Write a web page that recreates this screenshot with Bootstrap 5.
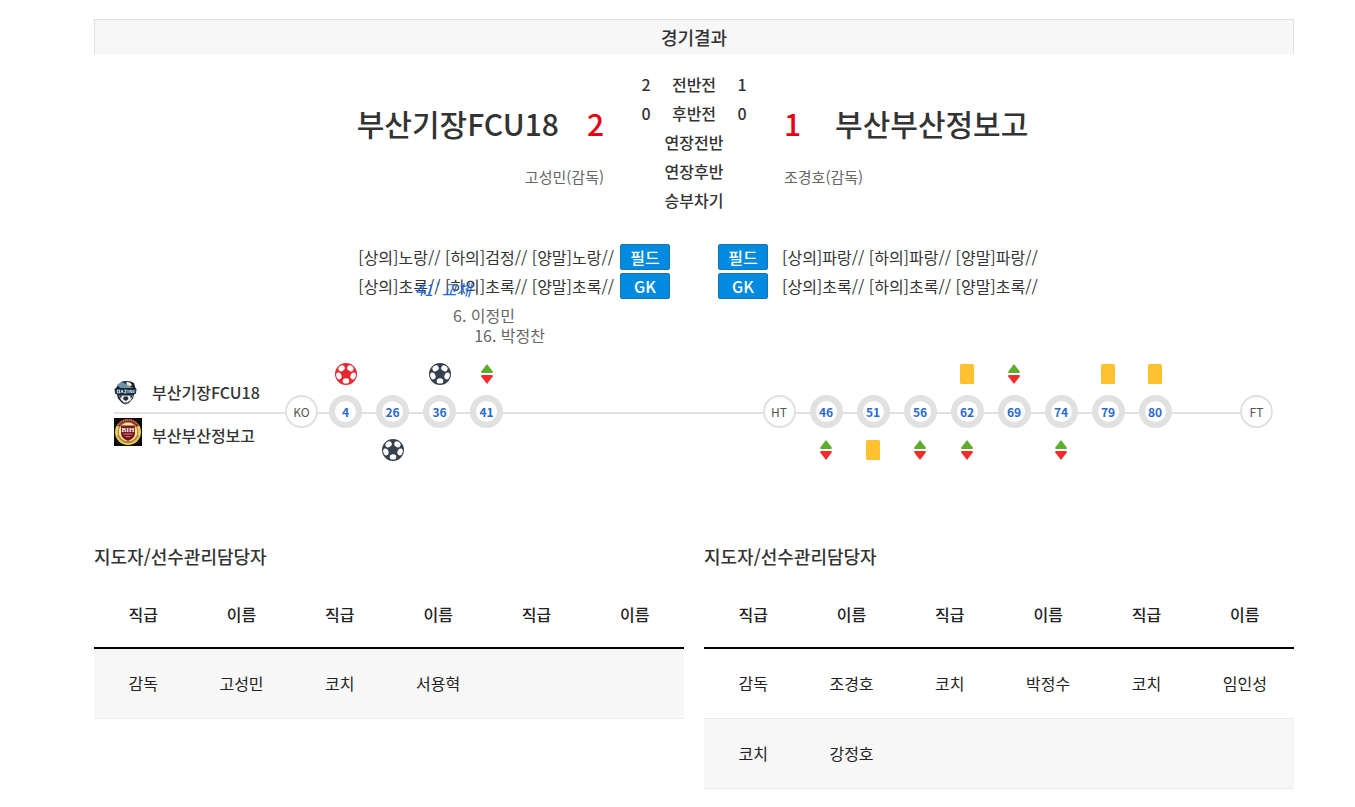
<!DOCTYPE html>
<html lang="ko">
<head>
<meta charset="utf-8">
<meta name="viewport" content="width=device-width, initial-scale=1">
<title>경기결과</title>
<link href="https://cdn.jsdelivr.net/npm/bootstrap@5.3.0/dist/css/bootstrap.min.css" rel="stylesheet">
<style>
  body { font-family: "Noto Sans CJK KR", "Noto Sans", sans-serif; font-size: 16px; line-height: 24px; color: #333; background: #fff; padding: 19px 0 18px 33px; }
  .wrap { max-width: 1200px; margin: 0 auto; }
  .page-title { font-size: 18px; line-height: 34px; font-weight: 500; background: #f7f7f7; border: 1px solid #e1e1e1; border-bottom: 0; margin: 0; text-align: center; }
  .score-grid { display: grid; grid-template-columns: 1fr 180px 1fr; padding-top: 15px; }
  .team-line { display: flex; gap: 28px; font-size: 30px; line-height: 44px; font-weight: 500; padding-top: 32px; }
  .team-line h2 { font-size: 30px; line-height: 44px; font-weight: 500; margin: 0; }
  .team-away { gap: 34px; }
  .goals { color: #e60012; }
  .coach { font-size: 15px; line-height: 22px; color: #666; margin-top: 21px; }
  .period-table { width: 132px; margin: 0 auto; font-weight: 500; }
  .period-table th { font-weight: 500; width: 60px; white-space: nowrap; }
  .period-table td, .period-table th { height: 29px; padding: 0; text-align: center; }
  .period-table td { width: 36px; }
  .kit-btn { width: 50px; height: 26px; padding: 0; font-size: 16px; line-height: 24px; font-weight: 500; color: #fff; background: #008ae0; border: 1px solid #1f73a8; border-radius: 2px; }
  .kit-btn:hover { color: #fff; background: #0079c6; }
  .kits { display: grid; grid-template-columns: 1fr 1fr; column-gap: 48px; row-gap: 3px; padding-top: 30px; }
  .kit-home, .kit-away { display: flex; align-items: center; }
  .kit-home { justify-content: flex-end; gap: 6px; }
  .kit-away { gap: 14px; }
  .timeline { position: relative; display: grid; grid-template-columns: 171px 1fr 1fr 33px; padding: 0 21px 0 20px; margin-top: 63px; }
  .timeline::before { content: ""; position: absolute; left: 20px; right: 37px; top: 50px; height: 2px; background: #e1e1e1; }
  .teams { position: relative; display: flex; flex-direction: column; gap: 10px; padding-top: 14px; font-weight: 500; }
  .club { display: flex; align-items: center; gap: 10px; height: 32px; }
  .club-away { height: 34px; }
  .club-away svg { align-self: flex-start; }
  .half { position: relative; display: flex; gap: 14px; }
  .slot { position: relative; width: 33px; display: grid; grid-template-rows: 24px 33px 26px; row-gap: 9px; align-items: center; justify-items: center; }
  .half-first .slot:first-child { margin-right: -3px; }
  .dot { grid-row: 2; width: 33px; height: 33px; border-radius: 50%; border: 2px solid #e1e1e1; background: #fff; color: #555; font-size: 12px; line-height: 29px; text-align: center; }
  .dot-event { border-width: 6px; line-height: 22px; color: #2a6ad6; font-weight: 700; text-decoration: none; display: block; white-space: nowrap; }
  .above { grid-row: 1; } .below { grid-row: 3; }
  .tip { position: absolute; left: -55px; bottom: 118px; width: 130px; white-space: nowrap; color: #666; line-height: 20px; }
  .tip-head { color: #1b6be0; font-style: italic; line-height: 32px; }
  .staff { --bs-gutter-x: 20px; margin-top: 80px; }
  .staff h3 { font-size: 18px; line-height: 26px; font-weight: 500; margin: 0; }
  .staff-table { table-layout: fixed; margin: 11px 0 0; --bs-table-bg: transparent; text-align: center; vertical-align: middle; }
  .staff-table th { height: 68px; padding: 0; font-weight: 500; vertical-align: middle; border: 0; border-bottom: 2px solid #000; color: #222; }
  .staff-table td { height: 70px; padding: 0; border: 0; border-bottom: 1px solid #ebebeb; color: #222; }
  .staff-table tbody tr:last-child td { background: #f7f7f7; }
</style>
</head>
<body>
<svg width="0" height="0" class="position-absolute" aria-hidden="true">
  <symbol id="ball" viewBox="0 0 22 22">
    <circle cx="11" cy="11" r="11" fill="currentColor"/>
    <g fill="#fff">
      <ellipse cx="6.600" cy="5.300" rx="3.300" ry="2.700" transform="rotate(-35 6.600 5.300)"/>
      <ellipse cx="15.400" cy="5.300" rx="3.300" ry="2.700" transform="rotate(35 15.400 5.300)"/>
      <ellipse cx="3.900" cy="12.900" rx="2.600" ry="3.500" transform="rotate(-18 3.900 12.900)"/>
      <ellipse cx="18.100" cy="12.900" rx="2.600" ry="3.500" transform="rotate(18 18.100 12.900)"/>
      <ellipse cx="11" cy="17.900" rx="3.300" ry="2.600"/>
    </g>
  </symbol>
  <symbol id="swap" viewBox="0 0 12 20">
    <path d="M6 0l5.800 7.500Q12 9 11 9H1Q0 9 .2 7.500z" fill="#5fad2f"/>
    <path d="M6 20l5.800-7.500Q12 11 11 11H1Q0 11 .2 12.500z" fill="#f52a2a"/>
  </symbol>
  <symbol id="yellow" viewBox="0 0 14 20"><rect width="14" height="20" rx="1.500" fill="#ffc130"/></symbol>
</svg>

<main class="wrap">
  <h1 class="page-title">경기결과</h1>

  <section class="score-grid">
    <div class="text-end">
      <div class="team-line justify-content-end"><h2>부산기장FCU18</h2><span class="goals">2</span></div>
      <div class="coach">고성민(감독)</div>
    </div>
    <table class="period-table">
      <tr><td>2</td><th scope="row">전반전</th><td>1</td></tr>
      <tr><td>0</td><th scope="row">후반전</th><td>0</td></tr>
      <tr><td></td><th scope="row">연장전반</th><td></td></tr>
      <tr><td></td><th scope="row">연장후반</th><td></td></tr>
      <tr><td></td><th scope="row">승부차기</th><td></td></tr>
    </table>
    <div>
      <div class="team-line team-away"><span class="goals">1</span><h2>부산부산정보고</h2></div>
      <div class="coach">조경호(감독)</div>
    </div>
  </section>

  <section class="kits">
    <div class="kit-home"><span>[상의]노랑// [하의]검정// [양말]노랑//</span><button type="button" class="btn kit-btn">필드</button></div>
    <div class="kit-away"><button type="button" class="btn kit-btn">필드</button><span>[상의]파랑// [하의]파랑// [양말]파랑//</span></div>
    <div class="kit-home"><span>[상의]초록// [하의]초록// [양말]초록//</span><button type="button" class="btn kit-btn">GK</button></div>
    <div class="kit-away"><button type="button" class="btn kit-btn">GK</button><span>[상의]초록// [하의]초록// [양말]초록//</span></div>
  </section>

  <section class="timeline">
    <div class="teams">
      <div class="club">
        <svg width="28" height="28" viewBox="0 0 28 28" aria-hidden="true">
          <path d="M4 7 8 3.500 12 3l5 .5L20 5l1.500 5 1 1-.5 4.500-2 1-1 4-4 4.500-3.500 1.500L8 25l-4-4.500L3 16.500l-2-1L.500 11 2 10z" fill="#18232f"/>
          <path d="M3 6.500 8 4l4 2 4 2.500 3.500 1.500H6z" fill="#6d93ac"/>
          <path d="M12 4l4 .500 2 2.500-2 1.500-3-1.500z" fill="#e8eef2"/>
          <path d="M13 6.500l3 1-1 1.500z" fill="#e0a63a"/>
          <path d="M1.500 11.500h20.500v4H1.500z" fill="#24465f"/>
          <path d="M3.500 12v3M3.500 12h2v3h-2M7 15l1-3 1 3M10.500 12h2l-2 3h2M14 12v3M16 15v-3l2 3v-3M19.800 12v3" fill="none" stroke="#e9f2f7" stroke-width=".8"/>
          <path d="M5 17.500h14l-2 4.500-5.500 4L7 22z" fill="#e8edf0"/>
          <path d="M10 18.500h3.500l1 2.500-2.700 2L9 21zM5.500 17.500h2.500l-1 3zM16 17.500h2.500l-1.500 3zM10 24.500h3.500L12 26z" fill="#1d2b38"/>
        </svg>
        <span>부산기장FCU18</span>
      </div>
      <div class="club club-away">
        <svg width="28" height="28" viewBox="0 0 28 28" aria-hidden="true">
          <rect width="28" height="28" fill="#0b0b0b"/>
          <circle cx="14" cy="14" r="13" fill="#e9cc62"/>
          <path d="M3 7.500A12.500 12.500 0 0 1 25 7.500L22 9A9.500 9.500 0 0 0 6 9z" fill="#8c2429"/>
          <path d="M4.500 7A11.500 11.500 0 0 1 23.500 7" fill="none" stroke="#f1dc8c" stroke-width="1" stroke-dasharray="1 1"/>
          <circle cx="14" cy="14" r="9.800" fill="#f4e6a8" stroke="#ad7c20" stroke-width="1"/>
          <path d="M3.500 17A11 11 0 0 0 24.500 17" fill="none" stroke="#a8761d" stroke-width="1"/>
          <path d="M7 7.500h14v8q0 4.500-7 7.500-7-3-7-7.500z" fill="#7c1820"/>
          <text x="14" y="14" text-anchor="middle" font-family="Liberation Serif, serif" font-size="7" font-weight="700" fill="#fff">BIH</text>
          <path d="M9.500 16h9M12 18.500h4" stroke="#d8a0a0" stroke-width=".8"/>
        </svg>
        <span>부산부산정보고</span>
      </div>
    </div>
    <div class="half half-first">
      <div class="slot"><span class="dot">KO</span></div>
      <div class="slot"><svg class="above" width="22" height="22" color="#e6292f"><use href="#ball"/></svg><a href="#" class="dot dot-event">4</a></div>
      <div class="slot"><a href="#" class="dot dot-event">26</a><svg class="below" width="22" height="22" color="#37414d"><use href="#ball"/></svg></div>
      <div class="slot"><svg class="above" width="22" height="22" color="#37414d"><use href="#ball"/></svg><a href="#" class="dot dot-event">36</a></div>
      <div class="slot"><svg class="above" width="14" height="20"><use href="#swap"/></svg><a href="#" class="dot dot-event">41</a>
        <div class="tip"><div class="tip-head">41' 교체</div><div class="text-center ps-2">6. 이정민</div><div class="text-end">16. 박정찬</div></div>
      </div>
    </div>
    <div class="half">
      <div class="slot"><span class="dot">HT</span></div>
      <div class="slot"><a href="#" class="dot dot-event">46</a><svg class="below" width="14" height="20"><use href="#swap"/></svg></div>
      <div class="slot"><a href="#" class="dot dot-event">51</a><svg class="below" width="14" height="20"><use href="#yellow"/></svg></div>
      <div class="slot"><a href="#" class="dot dot-event">56</a><svg class="below" width="14" height="20"><use href="#swap"/></svg></div>
      <div class="slot"><svg class="above" width="14" height="20"><use href="#yellow"/></svg><a href="#" class="dot dot-event">62</a><svg class="below" width="14" height="20"><use href="#swap"/></svg></div>
      <div class="slot"><svg class="above" width="14" height="20"><use href="#swap"/></svg><a href="#" class="dot dot-event">69</a></div>
      <div class="slot"><a href="#" class="dot dot-event">74</a><svg class="below" width="14" height="20"><use href="#swap"/></svg></div>
      <div class="slot"><svg class="above" width="14" height="20"><use href="#yellow"/></svg><a href="#" class="dot dot-event">79</a></div>
      <div class="slot"><svg class="above" width="14" height="20"><use href="#yellow"/></svg><a href="#" class="dot dot-event">80</a></div>
    </div>
    <div class="slot"><span class="dot">FT</span></div>
  </section>

  <div class="row staff">
    <section class="col-6">
      <h3>지도자/선수관리담당자</h3>
      <table class="table staff-table">
        <thead><tr><th>직급</th><th>이름</th><th>직급</th><th>이름</th><th>직급</th><th>이름</th></tr></thead>
        <tbody><tr><td>감독</td><td>고성민</td><td>코치</td><td>서용혁</td><td></td><td></td></tr></tbody>
      </table>
    </section>
    <section class="col-6">
      <h3>지도자/선수관리담당자</h3>
      <table class="table staff-table">
        <thead><tr><th>직급</th><th>이름</th><th>직급</th><th>이름</th><th>직급</th><th>이름</th></tr></thead>
        <tbody>
          <tr><td>감독</td><td>조경호</td><td>코치</td><td>박정수</td><td>코치</td><td>임인성</td></tr>
          <tr><td>코치</td><td>강정호</td><td></td><td></td><td></td><td></td></tr>
        </tbody>
      </table>
    </section>
  </div>
</main>
<script src="https://cdn.jsdelivr.net/npm/bootstrap@5.3.0/dist/js/bootstrap.bundle.min.js"></script>
</body>
</html>
